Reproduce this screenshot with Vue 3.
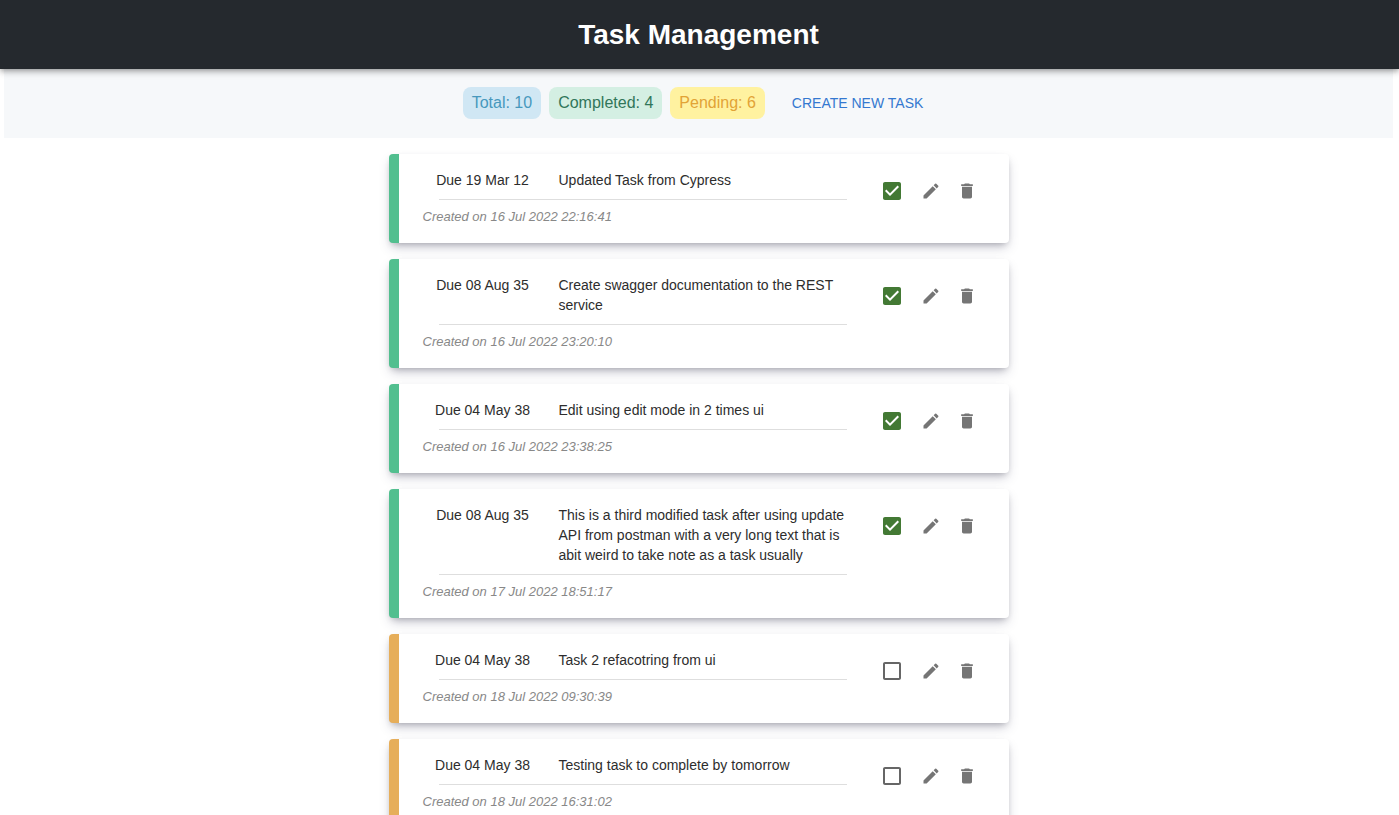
<script setup>
import { ref, computed } from 'vue'

const tasks = ref([
  { id: 1, due: '19 Mar 12', text: 'Updated Task from Cypress', created: '16 Jul 2022 22:16:41', done: true },
  { id: 2, due: '08 Aug 35', text: 'Create swagger documentation to the REST service', created: '16 Jul 2022 23:20:10', done: true },
  { id: 3, due: '04 May 38', text: 'Edit using edit mode in 2 times ui', created: '16 Jul 2022 23:38:25', done: true },
  { id: 4, due: '08 Aug 35', text: 'This is a third modified task after using update API from postman with a very long text that is abit weird to take note as a task usually', created: '17 Jul 2022 18:51:17', done: true },
  { id: 5, due: '04 May 38', text: 'Task 2 refacotring from ui', created: '18 Jul 2022 09:30:39', done: false },
  { id: 6, due: '04 May 38', text: 'Testing task to complete by tomorrow', created: '18 Jul 2022 16:31:02', done: false }
])

const total = 10
const completed = computed(() => tasks.value.filter((t) => t.done).length)
const pending = computed(() => total - completed.value)

function remove(id) {
  tasks.value = tasks.value.filter((t) => t.id !== id)
}
</script>

<template>
  <div class="page">
    <header class="header">
      <h1>Task Management</h1>
    </header>
    <div class="content">
      <section class="summary">
        <span class="chip total">Total: {{ total }}</span>
        <span class="chip completed">Completed: {{ completed }}</span>
        <span class="chip pending">Pending: {{ pending }}</span>
        <button type="button" class="create">CREATE NEW TASK</button>
      </section>
      <main class="list">
        <article v-for="task in tasks" :key="task.id" class="card" :class="{ done: task.done }">
          <div class="details">
            <div class="row">
              <span class="due">Due {{ task.due }}</span>
              <span class="text">{{ task.text }}</span>
            </div>
            <hr class="divider" />
            <p class="created">Created on {{ task.created }}</p>
          </div>
          <div class="actions">
            <label class="check">
              <input v-model="task.done" type="checkbox" :aria-label="'Complete ' + task.text" />
              <svg v-if="task.done" class="on" viewBox="0 0 24 24" width="24" height="24" aria-hidden="true">
                <path d="M19 3H5c-1.11 0-2 .9-2 2v14c0 1.1.89 2 2 2h14c1.11 0 2-.9 2-2V5c0-1.1-.89-2-2-2zm-9 14l-5-5 1.41-1.41L10 14.17l7.59-7.59L19 8l-9 9z" />
              </svg>
              <svg v-else viewBox="0 0 24 24" width="24" height="24" aria-hidden="true">
                <path d="M19 5v14H5V5h14m0-2H5c-1.1 0-2 .9-2 2v14c0 1.1.9 2 2 2h14c1.1 0 2-.9 2-2V5c0-1.1-.9-2-2-2z" />
              </svg>
            </label>
            <button type="button" class="icon" aria-label="Edit task">
              <svg viewBox="0 0 24 24" width="20" height="20" aria-hidden="true">
                <path d="M3 17.25V21h3.75L17.81 9.94l-3.75-3.75L3 17.25zM20.71 7.04c.39-.39.39-1.02 0-1.41l-2.34-2.34a.9959.9959 0 0 0-1.41 0l-1.83 1.83 3.75 3.75 1.83-1.83z" />
              </svg>
            </button>
            <button type="button" class="icon" aria-label="Delete task" @click="remove(task.id)">
              <svg viewBox="0 0 24 24" width="20" height="20" aria-hidden="true">
                <path d="M6 19c0 1.1.9 2 2 2h8c1.1 0 2-.9 2-2V7H6v12zM19 4h-3.5l-1-1h-5l-1 1H5v2h14V4z" />
              </svg>
            </button>
          </div>
        </article>
      </main>
    </div>
  </div>
</template>

<style>
body {
  margin: 0;
  background: #fff;
}
</style>

<style scoped>
.page {
  font-family: "Liberation Sans", Helvetica, Arial, sans-serif;
  color: #2d2d2d;
}
.header {
  position: relative;
  padding: 17px 2px 16px 0;
  background: #25292e;
  box-shadow: 0 2px 4px -1px rgba(0, 0, 0, 0.2), 0 4px 5px rgba(0, 0, 0, 0.14), 0 1px 10px rgba(0, 0, 0, 0.12);
}
h1 {
  margin: 0;
  color: #fff;
  font-size: 28px;
  line-height: 36px;
  font-weight: 700;
  text-align: center;
}
.content {
  margin: 0 6px 0 4px;
}
.summary {
  display: flex;
  align-items: center;
  justify-content: center;
  gap: 8px;
  padding: 18px 0 19px;
  background: #f6f8fa;
}
.chip {
  padding: 4px 9px;
  border-radius: 8px;
  font-size: 16px;
  line-height: 24px;
}
.total {
  background: #d0e7f4;
  color: #4798bd;
}
.completed {
  background: #d4efe3;
  color: #31765a;
}
.pending {
  background: #fff2a0;
  color: #e2a336;
}
.create {
  margin-left: 8px;
  padding: 4px 11px;
  border: 0;
  background: none;
  color: #3478d0;
  font-family: inherit;
  font-size: 14px;
  line-height: 24px;
  cursor: pointer;
}
.list {
  display: flex;
  flex-direction: column;
  gap: 16px;
  max-width: 620px;
  margin: 16px auto;
}
.card {
  display: flex;
  gap: 8px;
  padding: 16px 24px;
  border-left: 10px solid #e6ae5a;
  border-radius: 4px;
  background: #fff;
  box-shadow: 0 6px 12px -2px rgba(50, 50, 93, 0.25), 0 3px 7px -3px rgba(0, 0, 0, 0.3);
}
.card.done {
  border-left-color: #52bf8f;
}
.details {
  flex: 1;
  min-width: 0;
}
.row {
  display: grid;
  grid-template-columns: 120px 1fr;
  gap: 16px;
  font-size: 14px;
  line-height: 20px;
}
.due {
  text-align: center;
}
.divider {
  height: 1px;
  margin: 9px 16px 7px;
  border: 0;
  background: #dedede;
}
.created {
  margin: 0;
  color: #888;
  font-size: 13px;
  line-height: 20px;
  font-style: italic;
}
.actions {
  display: flex;
  align-items: center;
  align-self: flex-start;
}
.check {
  position: relative;
  display: flex;
  padding: 9px;
  cursor: pointer;
}
.check input {
  position: absolute;
  inset: 0;
  width: 100%;
  height: 100%;
  margin: 0;
  opacity: 0;
  cursor: pointer;
}
.icon {
  display: flex;
  padding: 8px;
  border: 0;
  background: none;
  cursor: pointer;
}
svg {
  fill: #666;
}
.icon svg {
  fill: #757575;
}
svg.on {
  fill: #437934;
}
</style>
